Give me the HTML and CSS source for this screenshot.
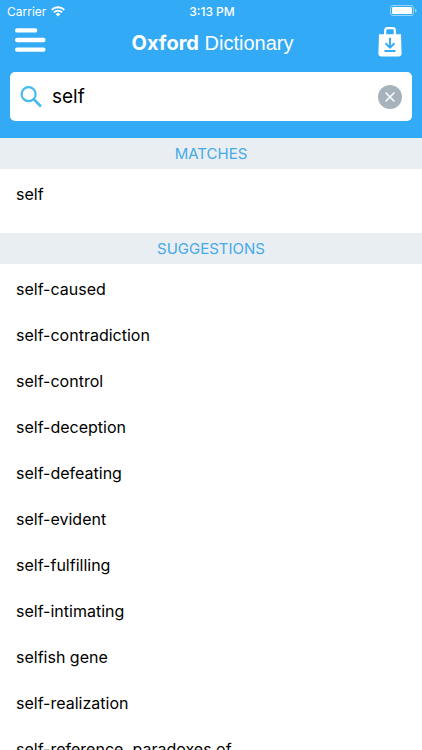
FILE: index.html
```html
<!DOCTYPE html>
<html lang="en">
<head>
    <meta charset="UTF-8">
    <meta name="viewport" content="width=device-width, initial-scale=1.0">
    <title>Oxford Dictionary</title>
    <link rel="stylesheet" href="styles.css">
</head>
<body>
    <header class="header">
        <!-- status bar -->
        <div class="status">
            <div class="status-left">
                <span>Carrier</span>
                <svg class="wifi" width="14" height="11" viewBox="0 0 14 11">
                    <path d="M0.7 3.9 A9 9 0 0 1 13.3 3.9" fill="none" stroke="#fff" stroke-width="2"/>
                    <path d="M2.9 6.4 A5.8 5.8 0 0 1 11.1 6.4" fill="none" stroke="#fff" stroke-width="1.9"/>
                    <path d="M4.7 8.2 A3.3 3.3 0 0 1 9.3 8.2 L7 10.6 Z" fill="#fff"/>
                </svg>
            </div>
            <div class="status-time">3:13 PM</div>
            <div class="status-right">
                <svg width="27" height="12" viewBox="0 0 27 12">
                    <rect x="0.5" y="0.5" width="23" height="10" rx="2.5" fill="none" stroke="#fff" stroke-opacity="0.5"/>
                    <rect x="2" y="2" width="20" height="7" rx="1.2" fill="#fff"/>
                    <path d="M25 3.5 Q26.6 4.1 26.6 5.5 Q26.6 6.9 25 7.5 Z" fill="#fff" fill-opacity="0.5"/>
                </svg>
            </div>
        </div>

        <div class="nav">
            <button class="icon-btn" type="button" aria-label="Menu">
                <svg width="32" height="28" viewBox="0 0 32 28">
                    <path d="M2.2 2.4 H20.2 M2.2 12 H28.4 M2.2 21.6 H28.4" fill="none" stroke="#fff" stroke-width="4.4" stroke-linecap="round"/>
                </svg>
            </button>
            <h1 class="title"><b>Oxford</b> Dictionary</h1>
            <button class="icon-btn" type="button" aria-label="Downloads">
                <svg width="24" height="30" viewBox="0 0 24 30">
                    <path d="M7.2 9 V3.4 Q7.2 1.2 9.4 1.2 H14.6 Q16.8 1.2 16.8 3.4 V9" fill="none" stroke="#fff" stroke-width="2.2"/>
                    <path d="M1 7.3 H23 L23.6 26.3 Q23.6 29.4 20.6 29.4 H3.4 Q0.4 29.4 0.4 26.3 Z" fill="#fff"/>
                    <path d="M12 10.7 V20.3 M7.5 16.3 L12 20.6 L16.5 16.3 M6.5 24 H17.5" fill="none" stroke="#33aaf5" stroke-width="1.9"/>
                </svg>
            </button>
        </div>

        <div class="search">
            <label for="search-input" aria-label="Search">
                <svg width="22" height="22" viewBox="0 0 22 22">
                    <circle cx="8.6" cy="8.2" r="7" fill="none" stroke="#46baef" stroke-width="2.2"/>
                    <path d="M13.5 13 L21 20.5" stroke="#46baef" stroke-width="2.7"/>
                </svg>
            </label>
            <input type="text" id="search-input" class="search-input" value="self">
            <button class="icon-btn" type="button" aria-label="Clear">
                <svg width="24" height="24" viewBox="0 0 24 24">
                    <circle cx="12" cy="12" r="12" fill="#a7b3bb"/>
                    <path d="M8 8 L16 16 M16 8 L8 16" stroke="#fff" stroke-width="1.5" stroke-linecap="round"/>
                </svg>
            </button>
        </div>
    </header>

    <main>
        <h2 class="section-title">MATCHES</h2>
        <ul class="list">
            <li><a href="#">self</a></li>
        </ul>

        <h2 class="section-title">SUGGESTIONS</h2>
        <ul class="list">
            <li><a href="#">self-caused</a></li>
            <li><a href="#">self-contradiction</a></li>
            <li><a href="#">self-control</a></li>
            <li><a href="#">self-deception</a></li>
            <li><a href="#">self-defeating</a></li>
            <li><a href="#">self-evident</a></li>
            <li><a href="#">self-fulfilling</a></li>
            <li><a href="#">self-intimating</a></li>
            <li><a href="#">selfish gene</a></li>
            <li><a href="#">self-realization</a></li>
            <li><a href="#">self-reference, paradoxes of</a></li>
        </ul>
    </main>
</body>
</html>
```
FILE: styles.css
```css
*{
    margin: 0;
    padding: 0;
    box-sizing: border-box;
}

html{
    scrollbar-width: none;
}

body{
    background: #ffffff;
    color: #000000;
    font-family: Inter, "Liberation Sans", sans-serif;
}

svg{
    display: block;
}

.header{
    background: #33aaf5;
    color: #ffffff;
    padding-bottom: 17px;
}

/* status bar */
.status{
    display: grid;
    grid-template-columns: 1fr auto 1fr;
    align-items: center;
    height: 22px;
    padding: 0 5px 0 7px;
    font-size: 12px;
}

.status-left{
    display: flex;
    align-items: center;
    gap: 5px;
}

.status-time{
    font-weight: 500;
}

.status-right{
    justify-self: end;
}

/* title row */
.nav{
    display: flex;
    align-items: center;
    justify-content: space-between;
    height: 40px;
    padding: 0 20px 0 15px;
}

.icon-btn{
    background: none;
    border: none;
    cursor: pointer;
}

.title{
    padding-top: 2px;
    font-size: 20px;
    font-weight: 400;
    font-family: "Liberation Sans", sans-serif;
}

.title b{
    font-family: Inter, sans-serif;
    font-weight: 700;
}

.search{
    display: flex;
    align-items: center;
    gap: 10px;
    height: 49px;
    margin: 10px 10px 0;
    padding: 0 10px;
    background: #ffffff;
    border-radius: 5px;
}

.search-input{
    flex: 1;
    min-width: 0;
    border: none;
    outline: none;
    background: none;
    color: #000000;
    font-family: inherit;
    font-size: 19px;
}

.section-title{
    background: #e9eef2;
    color: #46a9e8;
    font-size: 15px;
    font-weight: 400;
    line-height: 31px;
    text-align: center;
}

.list{
    list-style: none;
    padding: 2px 0 16px;
}

.list a{
    display: block;
    padding: 0 16px;
    color: #000000;
    font-size: 16px;
    line-height: 46px;
    text-decoration: none;
}
```
